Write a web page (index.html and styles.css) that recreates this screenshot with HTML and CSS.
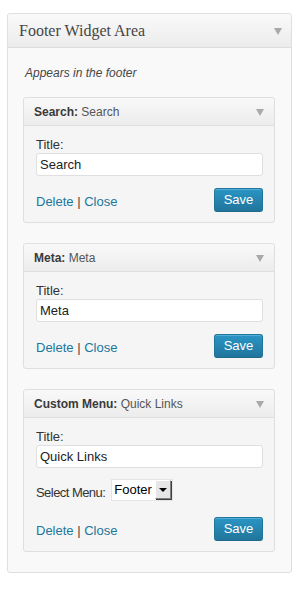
FILE: index.html
```html
<!DOCTYPE html>
<html>
<head>
<meta charset="utf-8">
<link rel="stylesheet" href="styles.css">
</head>
<body>
<div class="sidebar">
  <div class="sidebar-head">
    <h3 class="sidebar-name">Footer Widget Area</h3>
    <span class="arrow"></span>
  </div>
  <div class="sidebar-body">
    <p class="desc">Appears in the footer</p>

    <div class="widget">
      <div class="widget-top">
        <h4 class="widget-title">Search: <span class="in-title">Search</span></h4>
        <span class="arrow"></span>
      </div>
      <div class="widget-inside">
        <label class="field-label">Title:</label>
        <div class="input">Search</div>
        <div class="controls">
          <div class="links"><a class="link">Delete</a> | <a class="link">Close</a></div>
          <button class="save">Save</button>
        </div>
      </div>
    </div>

    <div class="widget">
      <div class="widget-top">
        <h4 class="widget-title">Meta: <span class="in-title">Meta</span></h4>
        <span class="arrow"></span>
      </div>
      <div class="widget-inside">
        <label class="field-label">Title:</label>
        <div class="input">Meta</div>
        <div class="controls">
          <div class="links"><a class="link">Delete</a> | <a class="link">Close</a></div>
          <button class="save">Save</button>
        </div>
      </div>
    </div>

    <div class="widget">
      <div class="widget-top">
        <h4 class="widget-title">Custom Menu: <span class="in-title">Quick Links</span></h4>
        <span class="arrow"></span>
      </div>
      <div class="widget-inside">
        <label class="field-label">Title:</label>
        <div class="input">Quick Links</div>
        <div class="select-row">
          <span class="select-label">Select Menu:</span>
          <span class="select"><span class="select-value">Footer</span><span class="select-btn"><span class="select-tri"></span></span></span>
        </div>
        <div class="controls controls-menu">
          <div class="links"><a class="link">Delete</a> | <a class="link">Close</a></div>
          <button class="save">Save</button>
        </div>
      </div>
    </div>
  </div>
</div>
</body>
</html>
```

FILE: styles.css
```css
html, body {
  margin: 0;
  padding: 0;
  background: #ffffff;
}
body {
  font-family: "Liberation Sans", Arial, sans-serif;
  font-size: 13px;
  color: #333333;
  padding: 13px 0 0 7px;
}
.sidebar {
  width: 283px;
  border: 1px solid #dfdfdf;
  border-radius: 3px;
  background: #f9f9f9;
  box-shadow: inset 0 1px 0 #ffffff;
}
.sidebar-head {
  height: 33px;
  border-bottom: 1px solid #dcdcdc;
  background: linear-gradient(to bottom, #f9f9f9, #ececec);
  border-radius: 3px 3px 0 0;
  display: flex;
  align-items: center;
  justify-content: space-between;
  padding: 0 9px 0 11px;
}
.sidebar-name {
  margin: 0;
  font-family: "Liberation Serif", "Times New Roman", serif;
  font-size: 16px;
  font-weight: normal;
  color: #464646;
  line-height: 20px;
}
.arrow {
  width: 0;
  height: 0;
  border-left: 4px solid transparent;
  border-right: 4px solid transparent;
  border-top: 7px solid #a9a9a9;
  margin-top: 2px;
}
.sidebar-body {
  padding: 0 16px 20px 15px;
}
.desc {
  margin: 0;
  padding: 19px 0 17px 2px;
  font-size: 12px;
  font-style: italic;
  line-height: 13px;
  color: #464646;
}
.widget {
  border: 1px solid #dfdfdf;
  border-radius: 3px;
  background: #f5f5f5;
  margin-bottom: 20px;
}
.widget:last-child {
  margin-bottom: 0;
}
.widget-top {
  height: 27px;
  border-bottom: 1px solid #dfdfdf;
  background: linear-gradient(to bottom, #f9f9f9, #ececec);
  border-radius: 3px 3px 0 0;
  display: flex;
  align-items: center;
  justify-content: space-between;
  padding: 0 10px 0 10px;
}
.widget-title {
  margin: 0;
  font-size: 12px;
  font-weight: bold;
  color: #3a3a3a;
  line-height: 16px;
}
.in-title {
  font-weight: normal;
  color: #555555;
}
.widget-inside {
  padding: 11px 11px 10px 12px;
}
.field-label {
  display: block;
  line-height: 16px;
  color: #333333;
}
.input {
  height: 21px;
  line-height: 21px;
  border: 1px solid #dfdfdf;
  border-radius: 3px;
  background: #ffffff;
  padding: 0 3px;
  color: #222222;
}
.controls {
  display: flex;
  justify-content: space-between;
  align-items: center;
  margin-top: 12px;
}
.controls-menu {
  margin-top: 16px;
}
.links {
  color: #464646;
  padding-top: 2px;
}
.link {
  color: #21759b;
  text-decoration: none;
}
.save {
  width: 49px;
  height: 24px;
  padding: 0 0 2px;
  font-family: "Liberation Sans", Arial, sans-serif;
  font-size: 13px;
  color: #ffffff;
  border: 1px solid #21759b;
  border-bottom-color: #1e6a8d;
  border-radius: 3px;
  background: linear-gradient(to bottom, #2a95c5, #21759b);
  box-shadow: inset 0 1px 0 rgba(120, 200, 230, 0.5);
}
.select-row {
  display: flex;
  align-items: center;
  margin-top: 11px;
}
.select-label {
  margin-top: 5px;
  margin-right: 6px;
  letter-spacing: -0.55px;
}
.select {
  display: flex;
  height: 20px;
  border: 1px solid #e4e4e4;
  background: #ffffff;
  padding: 0 1px 0 0;
}
.select-value {
  line-height: 20px;
  padding: 0 3px 0 2px;
  font-size: 13px;
  color: #000000;
}
.select-btn {
  width: 16px;
  height: 19px;
  box-sizing: border-box;
  background: #e6e6e6;
  border-top: 1px solid #ffffff;
  border-left: 1px solid #ffffff;
  border-right: 1px solid #808080;
  border-bottom: 1px solid #808080;
  box-shadow: 1px 1px 0 #404040;
  display: flex;
  align-items: center;
  justify-content: center;
}
.select-tri {
  width: 0;
  height: 0;
  border-left: 4px solid transparent;
  border-right: 4px solid transparent;
  border-top: 4px solid #000000;
}
```
